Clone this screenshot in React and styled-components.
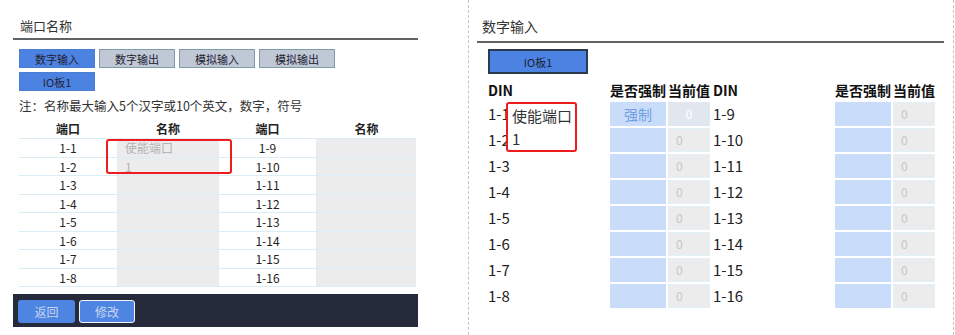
import React from 'react';
import styled, { createGlobalStyle } from 'styled-components';

const GlobalStyle = createGlobalStyle`
  body {
    margin: 0;
    background: #fff;
    font-family: "Noto Sans CJK SC", "Noto Sans", sans-serif;
    color: #222;
  }
`;

const leftRows = [
  ['1-1', '使能端口', '1-9'],
  ['1-2', '1', '1-10'],
  ['1-3', '', '1-11'],
  ['1-4', '', '1-12'],
  ['1-5', '', '1-13'],
  ['1-6', '', '1-14'],
  ['1-7', '', '1-15'],
  ['1-8', '', '1-16'],
];

const tabs = ['数字输入', '数字输出', '模拟输入', '模拟输出'];

function App() {
  return (
    <Page>
      <GlobalStyle />
      <LeftPanel>
        <Title>端口名称</Title>
        <TabRow>
          {tabs.map((t, i) => (
            <Tab key={t} $active={i === 0}>{t}</Tab>
          ))}
        </TabRow>
        <TabRow $second>
          <Tab $active>IO板1</Tab>
        </TabRow>
        <Note>注：名称最大输入5个汉字或10个英文，数字，符号</Note>
        <NameHead>
          <span>端口</span>
          <span>名称</span>
          <span>端口</span>
          <span>名称</span>
        </NameHead>
        <NameTable>
          {leftRows.map(([a, name, b]) => (
            <React.Fragment key={a}>
              <PortCell>{a}</PortCell>
              <NameCell>{name}</NameCell>
              <PortCell>{b}</PortCell>
              <NameCell />
            </React.Fragment>
          ))}
          <Mark $left={87} $top={1} $width={126} $height={35} />
        </NameTable>
        <Footer>
          <FootButton>返回</FootButton>
          <FootButton $outlined>修改</FootButton>
        </Footer>
      </LeftPanel>

      <RightPanel>
        <Title $wide>数字输入</Title>
        <BoardButton>IO板1</BoardButton>
        <DinGrid>
          <HeadCell>DIN</HeadCell>
          <HeadCell>是否强制</HeadCell>
          <HeadCell>当前值</HeadCell>
          <HeadCell>DIN</HeadCell>
          <HeadCell>是否强制</HeadCell>
          <HeadCell>当前值</HeadCell>
          {leftRows.map(([a, , b], i) => (
            <React.Fragment key={a}>
              <DinLabel>{a}</DinLabel>
              <ForceCell $gap={2}>{i === 0 ? '强制' : ''}</ForceCell>
              <ValueCell $gap={3} $live={i === 0}>0</ValueCell>
              <DinLabel>{b}</DinLabel>
              <ForceCell $gap={2} />
              <ValueCell $gap={0}>0</ValueCell>
            </React.Fragment>
          ))}
          <Callout>
            <span>使能端口</span>
            <span>1</span>
          </Callout>
        </DinGrid>
      </RightPanel>
    </Page>
  );
}

export default App;

const Page = styled.div`
  display: flex;
  align-items: flex-start;
  width: 955px;
  height: 335px;
  overflow: hidden;
`;

const LeftPanel = styled.div`
  margin-left: 13px;
  width: 405px;
  display: flex;
  flex-direction: column;
`;

const Title = styled.div`
  padding: 17px 0 ${p => (p.$wide ? '6px' : '3px')} ${p => (p.$wide ? '5px' : '7px')};
  font-size: ${p => (p.$wide ? '14px' : '13px')};
  line-height: 18px;
  color: #333;
  border-bottom: 2px solid #5f6366;
`;

const TabRow = styled.div`
  display: flex;
  gap: 4px;
  padding-left: 6px;
  margin-top: ${p => (p.$second ? '4px' : '9px')};
`;

const Tab = styled.div`
  box-sizing: border-box;
  width: 76px;
  height: 19px;
  display: flex;
  align-items: center;
  justify-content: center;
  font-size: 11px;
  color: #223;
  background: ${p => (p.$active ? '#4c83e2' : '#c0c8d6')};
  border: 1px solid ${p => (p.$active ? '#4a7fcf' : '#7f9cab')};
`;

const Note = styled.div`
  margin-top: 6px;
  padding-left: 6px;
  font-size: 12.5px;
  line-height: 18px;
  color: #333;
`;

const columns = '98px 100px 97px 99px';

const NameHead = styled.div`
  display: grid;
  grid-template-columns: ${columns};
  column-gap: 1px;
  margin: 3px 0 0 6px;
  height: 20px;
  align-items: center;
  font-size: 12px;
  font-weight: 700;
  text-align: center;
`;

const NameTable = styled.div`
  position: relative;
  display: grid;
  grid-template-columns: ${columns};
  grid-auto-rows: 17.5px;
  gap: 1px;
  width: max-content;
  margin-left: 6px;
  padding: 1px 0;
  background: #dcedf6;
`;

const PortCell = styled.div`
  background: #fff;
  font-size: 12px;
  line-height: 17.5px;
  text-align: center;
  color: #222;
`;

const NameCell = styled.div`
  background: #ececec;
  font-size: 12px;
  line-height: 17.5px;
  padding-left: 7px;
  color: #b3b3b3;
`;

const Mark = styled.div`
  position: absolute;
  left: ${p => p.$left}px;
  top: ${p => p.$top}px;
  width: ${p => p.$width}px;
  height: ${p => p.$height}px;
  box-sizing: border-box;
  border: 2.5px solid #ee1c1c;
  border-radius: 3px;
`;

const Footer = styled.div`
  margin-top: 7px;
  height: 33px;
  box-sizing: border-box;
  padding: 6px 5px 4px;
  display: flex;
  gap: 4px;
  background: #262b3c;
`;

const FootButton = styled.div`
  box-sizing: border-box;
  width: ${p => (p.$outlined ? '56px' : '57px')};
  height: 23px;
  display: flex;
  align-items: center;
  justify-content: center;
  border-radius: 3px;
  font-size: 12px;
  color: #c6d5f0;
  background: #4f85e2;
  border: ${p => (p.$outlined ? '1.5px solid #f2f4f8' : 'none')};
`;

const RightPanel = styled.div`
  margin-left: 50px;
  width: 486px;
  height: 335px;
  box-sizing: border-box;
  padding: 0 9px 0 8px;
  border-left: 1px dashed #c4c4c4;
  border-right: 1px dashed #c4c4c4;
`;

const BoardButton = styled.div`
  box-sizing: border-box;
  margin: 6px 0 0 11px;
  width: 100px;
  height: 25px;
  display: flex;
  align-items: center;
  justify-content: center;
  font-size: 11px;
  color: #1c2230;
  background: #4c83e2;
  border: 2px solid #2c3a4e;
`;

const DinGrid = styled.div`
  position: relative;
  display: grid;
  grid-template-columns: 122px 58px 45px 122px 58px 42px;
  grid-template-rows: 20px;
  grid-auto-rows: 24px;
  row-gap: 2px;
  margin: 6px 0 0 11px;
  & > :nth-child(-n + 6) {
    margin-bottom: 1px;
  }
`;

const HeadCell = styled.div`
  font-size: 14px;
  font-weight: 700;
  line-height: 20px;
  color: #111;
  white-space: nowrap;
`;

const DinLabel = styled.div`
  font-size: 15px;
  line-height: 24px;
  color: #222;
`;

const ForceCell = styled.div`
  margin-right: ${p => p.$gap}px;
  background: #c9ddfa;
  font-size: 14px;
  line-height: 24px;
  text-align: center;
  color: #6f9de3;
`;

const ValueCell = styled.div`
  margin-right: ${p => p.$gap}px;
  box-sizing: border-box;
  border: 1px solid ${p => (p.$live ? '#e3e8f0' : '#e2f1f8')};
  background: ${p => (p.$live ? '#e2e7ef' : '#ececec')};
  font-size: 12px;
  line-height: 22px;
  padding-left: ${p => (p.$live ? '0' : '7px')};
  text-align: ${p => (p.$live ? 'center' : 'left')};
  color: ${p => (p.$live ? '#ffffff' : '#c6c6c6')};
`;

const Callout = styled.div`
  position: absolute;
  left: 18px;
  top: 22px;
  width: 71px;
  height: 50px;
  box-sizing: border-box;
  padding: 0 0 0 4px;
  display: flex;
  flex-direction: column;
  justify-content: space-around;
  background: #fff;
  border: 2.5px solid #ee1c1c;
  border-radius: 3px;
  font-size: 15px;
  line-height: 20px;
  color: #333;
`;
